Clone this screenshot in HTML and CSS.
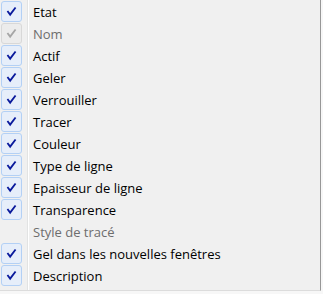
FILE: index.html
```html
<!DOCTYPE html>
<html lang="fr">
<head>
    <meta charset="UTF-8">
    <title>Colonnes</title>
    <link rel="stylesheet" href="styles.css">
</head>
<body>
    <div class="menu">
        <div class="item"><span class="box"><svg viewBox="0 0 21 21"><polyline points="6,10 9,14 15,6"/></svg></span><span class="label">Etat</span></div>
        <div class="item disabled"><span class="box"><svg viewBox="0 0 21 21"><polyline points="6,10 9,14 15,6"/></svg></span><span class="label">Nom</span></div>
        <div class="item"><span class="box"><svg viewBox="0 0 21 21"><polyline points="6,10 9,14 15,6"/></svg></span><span class="label">Actif</span></div>
        <div class="item"><span class="box"><svg viewBox="0 0 21 21"><polyline points="6,10 9,14 15,6"/></svg></span><span class="label">Geler</span></div>
        <div class="item"><span class="box"><svg viewBox="0 0 21 21"><polyline points="6,10 9,14 15,6"/></svg></span><span class="label">Verrouiller</span></div>
        <div class="item"><span class="box"><svg viewBox="0 0 21 21"><polyline points="6,10 9,14 15,6"/></svg></span><span class="label">Tracer</span></div>
        <div class="item"><span class="box"><svg viewBox="0 0 21 21"><polyline points="6,10 9,14 15,6"/></svg></span><span class="label">Couleur</span></div>
        <div class="item"><span class="box"><svg viewBox="0 0 21 21"><polyline points="6,10 9,14 15,6"/></svg></span><span class="label">Type de ligne</span></div>
        <div class="item"><span class="box"><svg viewBox="0 0 21 21"><polyline points="6,10 9,14 15,6"/></svg></span><span class="label">Epaisseur de ligne</span></div>
        <div class="item"><span class="box"><svg viewBox="0 0 21 21"><polyline points="6,10 9,14 15,6"/></svg></span><span class="label">Transparence</span></div>
        <div class="item disabled"><span class="box empty"></span><span class="label">Style de tracé</span></div>
        <div class="item"><span class="box"><svg viewBox="0 0 21 21"><polyline points="6,10 9,14 15,6"/></svg></span><span class="label">Gel dans les nouvelles fenêtres</span></div>
        <div class="item"><span class="box"><svg viewBox="0 0 21 21"><polyline points="6,10 9,14 15,6"/></svg></span><span class="label">Description</span></div>
    </div>
</body>
</html>
```

FILE: styles.css
```css
body {
    margin: 0;
    background: #f7f7f7;
    font-family: 'Open Sans', 'Noto Sans', Arial, sans-serif;
    font-size: 13px;
    color: #000;
}
.menu {
    width: 321px;
    height: 291px;
    box-sizing: border-box;
    padding-top: 1px;
    border-right: 1px solid #979797;
    border-bottom: 1px solid #dcdcdc;
    background: linear-gradient(to right, transparent 27px, #e2e3e3 27px, #e2e3e3 28px, #fff 28px, #fff 29px, transparent 29px), #f0f0f0;
}
.item {
    display: flex;
    height: 22px;
}
.box {
    width: 21px;
    height: 21px;
    margin-left: 1px;
    box-sizing: border-box;
    border: 1px solid #b3d0f5;
    border-radius: 3px;
    background: #e6eefa;
}
.box svg {
    display: block;
    width: 19px;
    height: 19px;
    fill: none;
    stroke: #0a1a9c;
    stroke-width: 2;
}
.label {
    margin-left: 11px;
    line-height: 22px;
}
.disabled .label {
    color: #6d6d6d;
}
.disabled .box {
    border-color: #d8d8d8;
    background: #ececec;
}
.disabled .box svg {
    stroke: #a6a6a6;
}
.box.empty {
    border: none;
    background: none;
}
```
